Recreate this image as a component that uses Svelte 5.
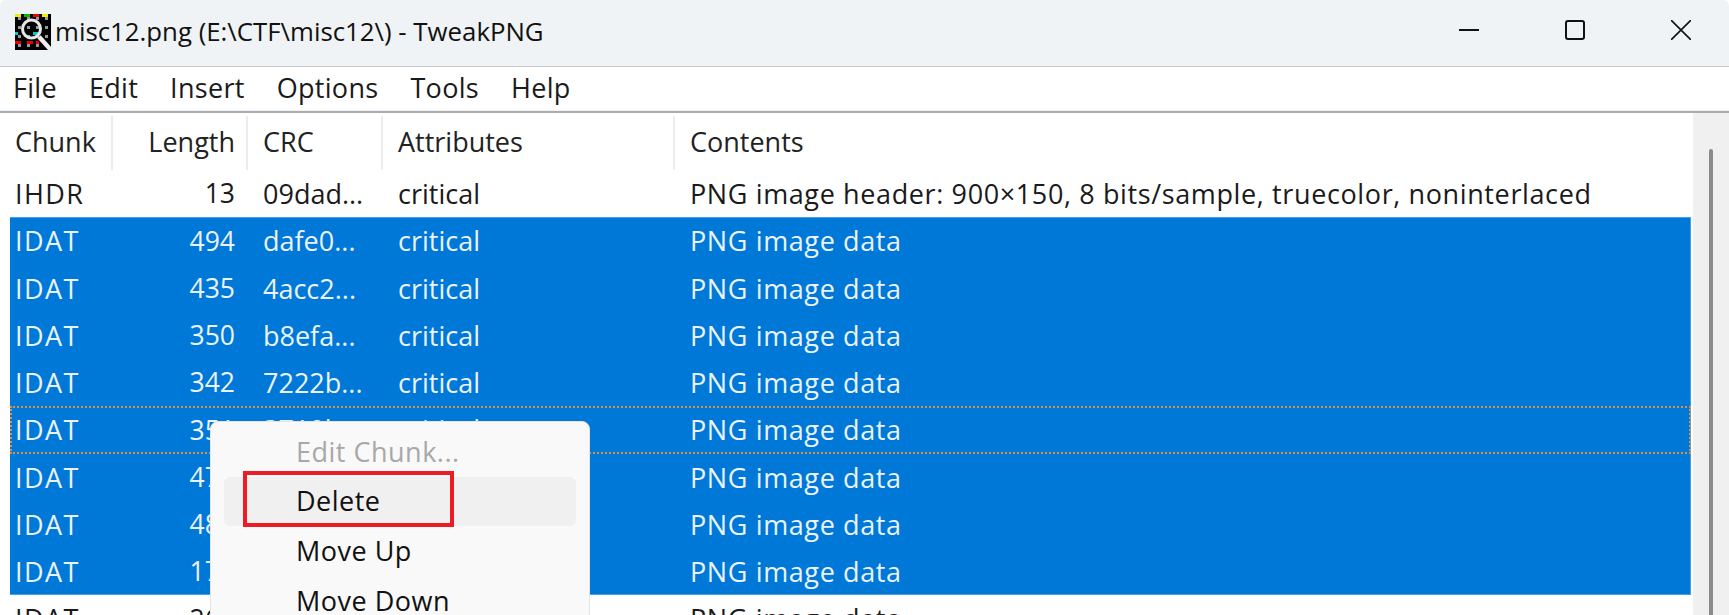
<script>
  const rows = [
    { c: 'IHDR', l: '13', r: '09dad...', a: 'critical', t: 'PNG image header: 900×150, 8 bits/sample, truecolor, noninterlaced', s: false },
    { c: 'IDAT', l: '494', r: 'dafe0...', a: 'critical', t: 'PNG image data', s: true, first: true },
    { c: 'IDAT', l: '435', r: '4acc2...', a: 'critical', t: 'PNG image data', s: true },
    { c: 'IDAT', l: '350', r: 'b8efa...', a: 'critical', t: 'PNG image data', s: true },
    { c: 'IDAT', l: '342', r: '7222b...', a: 'critical', t: 'PNG image data', s: true },
    { c: 'IDAT', l: '351', r: '3710b...', a: 'critical', t: 'PNG image data', s: true, f: true },
    { c: 'IDAT', l: '470', r: '', a: '', t: 'PNG image data', s: true },
    { c: 'IDAT', l: '480', r: '', a: '', t: 'PNG image data', s: true },
    { c: 'IDAT', l: '170', r: '', a: '', t: 'PNG image data', s: true, last: true },
    { c: 'IDAT', l: '260', r: '', a: '', t: 'PNG image data', s: false }
  ];
  const cells = [];
  const top = ['#ee0','#ee0','#000','#0b0','#0b0','#000','#e00','#e00','#000','#ee0','#ee0','#000'];
  const mid = ['#0cc','#000','#000','#000','#000','#000','#0cc','#0cc','#000','#000','#000','#000'];
  const low = ['#e00','#e00','#000','#000','#e00','#e00','#000','#e00','#000','#000','#000','#000'];
  for (let y = 0; y < 12; y++) for (let x = 0; x < 12; x++) {
    let fill = x % 3 === 1 && y % 3 === 1 ? '#999' : '#000';
    if (y === 0) fill = top[x];
    if (y === 6) fill = mid[x];
    if (y === 9) fill = low[x];
    cells.push({ x, y, fill });
  }
</script>

<div class="win">
  <header class="title">
    <svg class="icon" viewBox="0 0 12 12" shape-rendering="crispEdges" aria-hidden="true">
      {#each cells as p}<rect x={p.x} y={p.y} width="1" height="1" fill={p.fill} />{/each}
      <circle cx="5.5" cy="5" r="3" fill="none" stroke="#e6e6e6" stroke-width="1" shape-rendering="auto" />
      <path d="M8 7.6 12 12" stroke="#eee" stroke-width="1.5" shape-rendering="auto" />
    </svg>
    <span class="name">misc12.png (E:\CTF\misc12\) - TweakPNG</span>
    <div class="caption">
      <svg viewBox="0 0 20 20" aria-hidden="true"><path d="M0 10h20" stroke="#111" stroke-width="2" /></svg>
      <svg viewBox="0 0 20 20" aria-hidden="true"><rect x="1" y="1" width="18" height="18" rx="2" fill="none" stroke="#111" stroke-width="2" /></svg>
      <svg viewBox="0 0 20 20" aria-hidden="true"><path d="M0 0 20 20M20 0 0 20" stroke="#111" stroke-width="1.6" /></svg>
    </div>
  </header>

  <nav class="menu">
    <span>File</span><span>Edit</span><span>Insert</span><span>Options</span><span>Tools</span><span>Help</span>
  </nav>

  <div class="body">
    <div class="list">
      <div class="row head">
        <div class="cell d">Chunk</div>
        <div class="cell num d">Length</div>
        <div class="cell d">CRC</div>
        <div class="cell d">Attributes</div>
        <div class="cell">Contents</div>
      </div>
      {#each rows as r}
        <div class="row" class:sel={r.s} class:focus={r.f} class:first={r.first} class:last={r.last}>
          <div class="cell kind">{r.c}</div>
          <div class="cell num">{r.l}</div>
          <div class="cell">{r.r}</div>
          <div class="cell">{r.a}</div>
          <div class="cell text">{r.t}</div>
        </div>
      {/each}
    </div>
    <div class="scroll"><div class="thumb"></div></div>
  </div>

  <div class="ctx">
    <div class="item off">Edit Chunk...</div>
    <div class="item hover">Delete</div>
    <div class="item">Move Up</div>
    <div class="item">Move Down</div>
  </div>
  <div class="mark"></div>
</div>

<style>
  :global(body) { margin: 0; background: #fff; overflow: hidden; }
  .win {
    position: relative;
    width: 1729px;
    height: 615px;
    overflow: hidden;
    font: 27px/1 "Open Sans", "Noto Sans", sans-serif;
    color: #1a1a1a;
    display: flex;
    flex-direction: column;
  }
  .title {
    height: 67px;
    box-sizing: border-box;
    border-bottom: 1px solid #c9c9c9;
    border-radius: 6px 6px 0 0;
    background: #eff3f5;
    display: flex;
    align-items: center;
    padding-left: 15px;
    flex: none;
    font-size: 25.8px;
  }
  .icon { width: 36px; height: 38px; flex: none; margin-bottom: 2px; }
  .name { margin-left: 4px; color: #111; margin-bottom: 2px; }
  .caption { margin-left: auto; display: flex; align-items: center; gap: 86px; padding: 0 38px 7px 0; }
  .caption svg { width: 20px; height: 20px; display: block; }
  .menu {
    height: 43px;
    flex: none;
    display: flex;
    align-items: center;
    gap: 32px;
    padding: 0 0 3px 13px;
    box-sizing: border-box;
    background: #fff;
    letter-spacing: 0.3px;
  }
  .body {
    flex: 1;
    min-height: 0;
    display: flex;
    border-top: 1px solid #f0f0f0;
    position: relative;
  }
  .body::before { content: ""; position: absolute; left: 0; right: 0; top: 0; height: 2px; background: #a9adb1; }
  .list { flex: 1; min-width: 0; padding: 5px 2px 0 10px; }
  .row {
    display: grid;
    grid-template-columns: 103px 135px 135px 292px 1fr;
    height: 47.25px;
    align-items: center;
    box-sizing: border-box;
    white-space: nowrap;
    position: relative;
  }
  .row.head { height: 54px; color: #222; }
  .cell { padding: 0 5px; min-height: 0; height: 100%; display: flex; align-items: center; box-sizing: border-box; }
  .num { justify-content: flex-end; padding-right: 13px; font-size: 26.5px; }
  .cell:nth-child(3) { padding-left: 15px; }
  .cell:nth-child(4) { padding-left: 15px; }
  .cell:nth-child(5) { padding-left: 15px; }
  .kind { letter-spacing: 1.4px; }
  .text { letter-spacing: 0.62px; }
  .head .cell { padding-bottom: 4px; }
  .head .num { padding-right: 11px; font-size: 27px; }
  .d { border-right: 2px solid #ececec; }
  .sel { background: #0078d7; color: #eaf3fb; box-shadow: inset -1px 0 #4a9ee6; }
  .sel.first { box-shadow: inset -1px 0 #4a9ee6, inset 0 1px #4a9ee6; }
  .sel.last { box-shadow: inset -1px 0 #4a9ee6, inset 0 -1px #4a9ee6; }
  .focus::after {
    content: "";
    position: absolute;
    inset: 0;
    border: 2px dotted #d98f45;
  }
  .scroll { width: 36px; flex: none; background: #f0f0f0; display: flex; justify-content: center; }
  .thumb { width: 4px; height: 600px; margin-top: 38px; background: #8a8a8a; border-radius: 2px; }
  .ctx {
    position: absolute;
    left: 210px;
    top: 421px;
    width: 380px;
    height: 220px;
    box-sizing: border-box;
    background: #f9f9f9;
    border: 1px solid #e4e4e4;
    border-radius: 8px;
    padding: 5px 13px;
    color: #111;
    letter-spacing: 0.5px;
  }
  .item {
    height: 49.6px;
    display: flex;
    align-items: center;
    padding: 0 0 1px 72px;
    box-sizing: border-box;
    border-radius: 6px;
  }
  .off { color: #a8a8a8; }
  .hover { background: #f0f0f0; }
  .mark {
    position: absolute;
    left: 243px;
    top: 471px;
    width: 211px;
    height: 56px;
    box-sizing: border-box;
    border: 4px solid #ed1c24;
  }
</style>
